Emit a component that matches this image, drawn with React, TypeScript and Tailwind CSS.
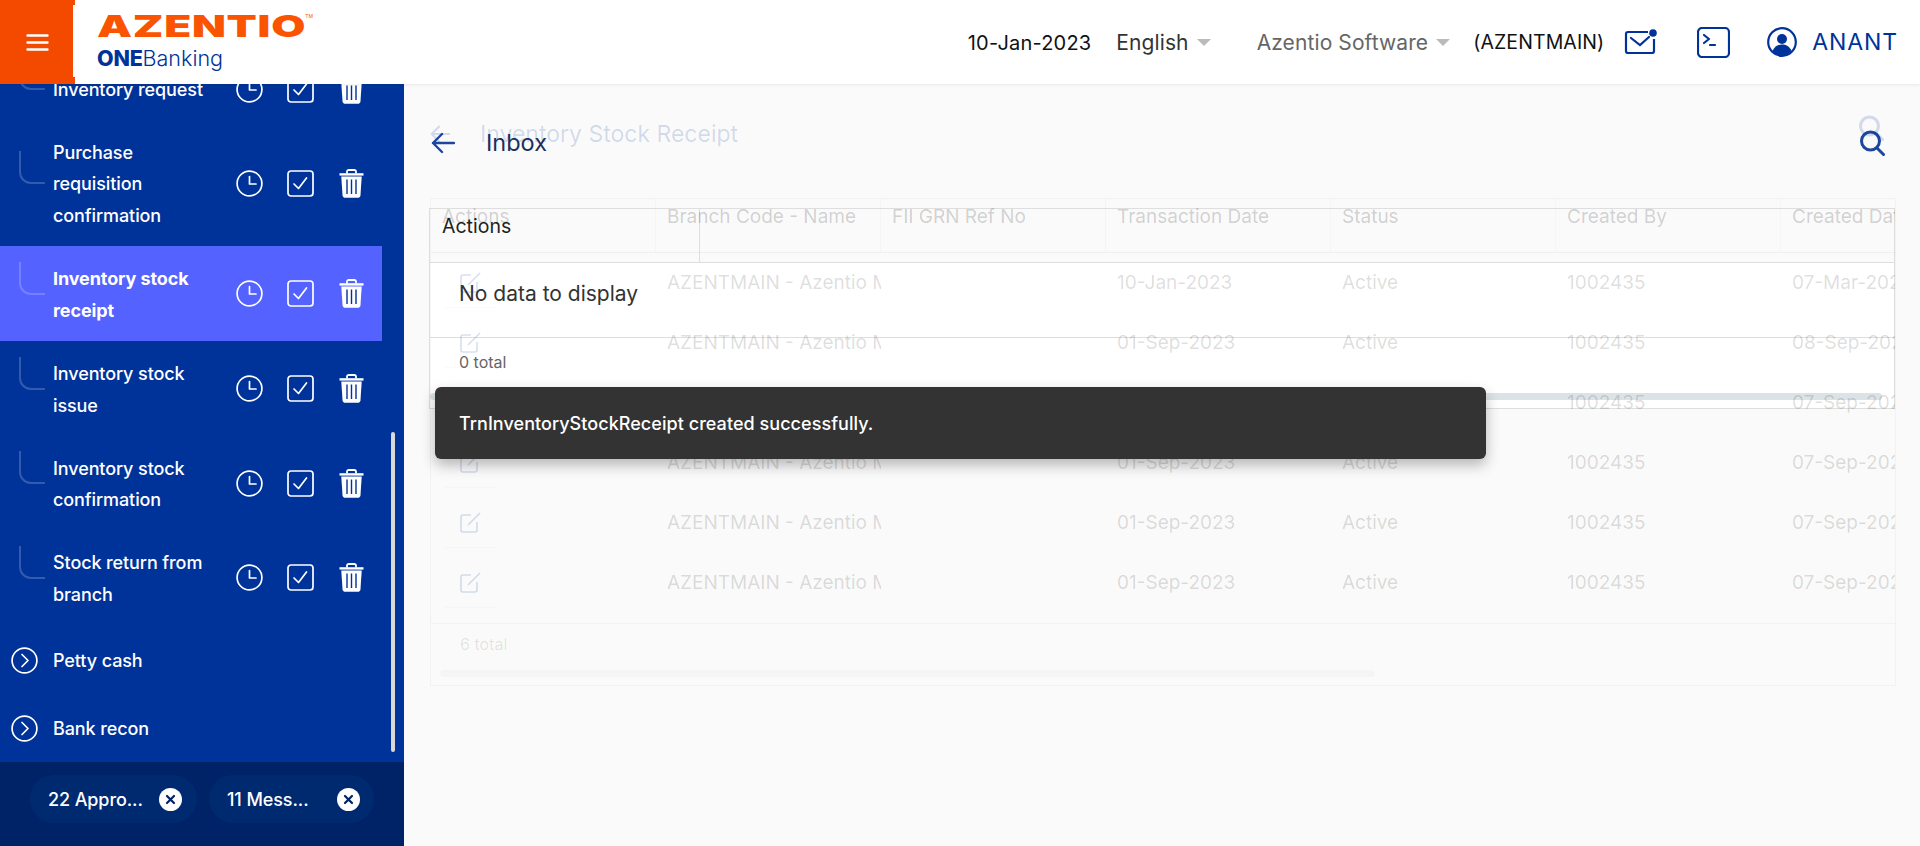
import React from "react";

const Clock = () => (
  <svg width="27" height="27" viewBox="0 0 27 27" fill="none" stroke="white" strokeWidth="1.7" className="shrink-0">
    <circle cx="13.5" cy="13.5" r="12.4" />
    <path d="M13.5 6.500v7.500h6.500" strokeLinecap="round" strokeLinejoin="round" />
  </svg>
);
const Check = () => (
  <svg width="27" height="27" viewBox="0 0 27 27" fill="none" stroke="white" strokeWidth="1.7" className="shrink-0">
    <rect x="1" y="1" width="25" height="25" rx="3" />
    <path d="M7 14l4.500 4.500L19.500 8" strokeLinecap="round" strokeLinejoin="round" />
  </svg>
);
const Trash = () => (
  <svg width="25" height="29" viewBox="0 0 25 29" className="shrink-0">
    <path d="M8 4.500V2.600C8 1.600 8.800 1 9.800 1h5.400c1 0 1.800.6 1.800 1.600v1.900" fill="none" stroke="white" strokeWidth="1.8" />
    <path d="M0.500 4.200h24v2.400h-24z" fill="white" />
    <path d="M2.300 7.600h20.400l-1.200 18.600c-.1 1.500-1.200 2.600-2.700 2.600H6.200c-1.500 0-2.600-1.100-2.700-2.600z" fill="white" />
    <path d="M8 10.500v14.500M12.500 10.500v14.500M17 10.500v14.500" stroke="#003399" strokeWidth="1.4" />
  </svg>
);
const Chevron = () => (
  <svg width="27" height="27" viewBox="0 0 27 27" fill="none" stroke="white" strokeWidth="1.7" className="shrink-0">
    <circle cx="13.5" cy="13.5" r="12.4" />
    <path d="M11 7.500l6 6-6 6" strokeLinecap="round" strokeLinejoin="round" />
  </svg>
);
const Close = () => (
  <svg width="23" height="23" viewBox="0 0 23 23" className="shrink-0">
    <circle cx="11.5" cy="11.5" r="11.5" fill="white" />
    <path d="M8 8l7 7M15 8l-7 7" stroke="#002366" strokeWidth="2.2" strokeLinecap="round" />
  </svg>
);
const Arrow = ({ w, color }: { w: number; color: string }) => (
  <svg width={w} height={w} viewBox="0 0 24 24" fill="none" stroke={color} strokeWidth="2.400" strokeLinecap="round" strokeLinejoin="round">
    <path d="M23 12H2M11 3l-9 9 9 9" />
  </svg>
);
const Search = ({ color }: { color: string }) => (
  <svg width="26" height="26" viewBox="0 0 26 26" fill="none" stroke={color} strokeWidth="3" strokeLinecap="round">
    <circle cx="11.5" cy="11" r="9" />
    <path d="M18 18l6.500 6.500" />
  </svg>
);
const Edit = () => (
  <svg width="22" height="21" viewBox="0 0 22 21" fill="none" stroke="rgba(0,51,153,0.16)" strokeWidth="1.6" className="block">
    <path d="M11 3H3a2 2 0 0 0-2 2v13a2 2 0 0 0 2 2h12a2 2 0 0 0 2-2V10" />
    <path d="M8 13L20 1" />
  </svg>
);

const items = [
  { l: ["Inventory request"], h: "h-[62px]" },
  { l: ["Purchase", "requisition", "confirmation"], h: "h-[126px]" },
  { l: ["Inventory stock", "receipt"], h: "h-[95px]", active: true },
  { l: ["Inventory stock", "issue"], h: "h-[95px]" },
  { l: ["Inventory stock", "confirmation"], h: "h-[94px]" },
  { l: ["Stock return from", "branch"], h: "h-[95px]" },
];

function Row({ l, h, active }: { l: string[]; h: string; active?: boolean }) {
  return (
    <div className={`relative flex w-[382px] items-center pl-[53px] ${h} ${active ? "bg-[#5462ff] font-bold" : "font-medium"}`}>
      <div className="absolute left-[19px] top-1/2 -mt-[32px] h-[33px] w-[26px] rounded-bl-[12px] border-b-2 border-l-2 border-white/20" />
      <div className="w-[183px] shrink-0 pt-[2px] text-[18px] leading-[31.5px] tracking-[-0.1px] text-white">
        {l.map((t) => (
          <div key={t}>{t}</div>
        ))}
      </div>
      <div className="flex items-center">
        <Clock />
        <span className="ml-[24px]"><Check /></span>
        <span className="ml-[25px]"><Trash /></span>
      </div>
    </div>
  );
}

const colsHead = ["Actions", "Branch Code - Name", "FII GRN Ref No", "Transaction Date", "Status", "Created By", "Created Date"];
const dates = [
  ["10-Jan-2023", "07-Mar-2023"],
  ["01-Sep-2023", "08-Sep-2023"],
  ["01-Sep-2023", "07-Sep-2023"],
  ["01-Sep-2023", "07-Sep-2023"],
  ["01-Sep-2023", "07-Sep-2023"],
  ["01-Sep-2023", "07-Sep-2023"],
];

export default function App() {
  return (
    <div className="flex h-[846px] w-[1920px] flex-col overflow-hidden bg-white font-['Inter',sans-serif] text-[#212529]">
      {/* Header */}
      <header className="relative z-20 flex h-[84px] shrink-0 items-center bg-white pr-[22px] shadow-[0_1px_3px_rgba(0,0,0,0.08)]">
        <div className="flex h-[84px] w-[75px] shrink-0 items-center justify-center bg-[#f34a00]">
          <svg width="23" height="17" viewBox="0 0 23 17" stroke="white" strokeWidth="2.4" strokeLinecap="round">
            <path d="M1.500 1.500h20M1.500 8.500h20M1.500 15.500h20" />
          </svg>
        </div>
        <div className="relative -ml-[2px] -mt-[3px] flex h-[72px] w-[264px] shrink-0 flex-col justify-center bg-white pl-[24px]">
          <div className="flex h-[30px] items-start">
            <span className="origin-left scale-x-[1.47] text-[30px] font-black leading-[30px] tracking-[0.5px] text-[#fb5400]">AZENTIO</span>
            <span className="ml-[66px] text-[5px] leading-[10px] text-[#fb5400]">TM</span>
          </div>
          <div className="mt-[5px] text-[21.5px] leading-[24px] text-[#003399]">
            <span className="font-extrabold tracking-[-0.2px]">ONE</span>
            <span className="font-light">Banking</span>
          </div>
        </div>
        <div className="ml-auto flex items-center">
          <span className="pt-[1px] text-[20px] tracking-[0.2px] text-[#111]">10-Jan-2023</span>
          <span className="ml-[25px] pt-[1px] text-[21px] tracking-[0.1px] text-[#333]">English</span>
          <span className="ml-[8px] h-0 w-0 border-x-[7px] border-t-[7px] border-x-transparent border-t-[#bbbbbb]" />
          <span className="ml-[46px] pt-[1px] text-[21px] tracking-[0.1px] text-[#666]">Azentio Software</span>
          <span className="ml-[8px] h-0 w-0 border-x-[7px] border-t-[7px] border-x-transparent border-t-[#bbbbbb]" />
          <span className="ml-[23px] pt-[1px] text-[19.5px] tracking-[0.1px] text-[#111]">(AZENTMAIN)</span>
          <svg className="ml-[20px]" width="33" height="26" viewBox="0 0 33 26" fill="none" stroke="#003399" strokeWidth="2.2">
            <path d="M24 3H4a2 2 0 0 0-2 2v17a2 2 0 0 0 2 2h24a2 2 0 0 0 2-2V10" />
            <path d="M7 9l9 7 9-8" strokeLinecap="round" />
            <circle cx="29" cy="4" r="3.8" fill="#003399" stroke="none" />
          </svg>
          <svg className="ml-[40px]" width="33" height="31" viewBox="0 0 33 31" fill="none" stroke="#003399" strokeWidth="2.2">
            <rect x="1" y="1" width="31" height="29" rx="4" />
            <path d="M7 8l5 4-5 4M13 18h5" strokeLinecap="round" strokeLinejoin="round" />
          </svg>
          <svg className="ml-[37px]" width="30" height="30" viewBox="0 0 30 30" fill="none" stroke="#003399" strokeWidth="2.2">
            <circle cx="15" cy="15" r="13.8" />
            <circle cx="15" cy="12" r="5" fill="#003399" stroke="none" />
            <path d="M5.500 24c2-5 5.500-6.500 9.500-6.500s7.500 1.500 9.500 6.500c-2.500 3-6 4.500-9.500 4.500s-7-1.500-9.500-4.500z" fill="#003399" stroke="none" />
          </svg>
          <span className="ml-[15px] text-[23px] tracking-[0.9px] text-[#003399]">ANANT</span>
        </div>
      </header>

      <div className="flex min-h-0 flex-1">
        {/* Sidebar */}
        <aside className="relative flex w-[404px] shrink-0 flex-col bg-[#003399]">
          <div className="min-h-0 flex-1 overflow-hidden">
            <div className="-mt-[26px]">
              {items.map((i) => (
                <Row key={i.l[0] + i.l[1]} {...i} />
              ))}
              <div className="flex h-[70px] items-center pl-[11px] text-[18px] font-medium tracking-[-0.1px] text-white">
                <Chevron />
                <span className="ml-[15px]">Petty cash</span>
              </div>
              <div className="flex h-[66px] items-center pl-[11px] text-[18px] font-medium tracking-[-0.1px] text-white">
                <Chevron />
                <span className="ml-[15px]">Bank recon</span>
              </div>
            </div>
          </div>
          <div className="absolute left-[391px] top-[348px] h-[320px] w-[4px] rounded-full bg-[#d9d9d9]" />
          <div className="flex h-[84px] shrink-0 items-start gap-[12px] bg-[#002266] pl-[30px] pt-[13px]">
            <div className="flex h-[48px] w-[167px] items-center rounded-full bg-[#002a70] pl-[18px] text-[18px] font-medium tracking-[-0.1px] text-white">
              <span className="w-[111px]">22 Appro...</span>
              <Close />
            </div>
            <div className="flex h-[48px] w-[165px] items-center rounded-full bg-[#002a70] pl-[18px] text-[18px] font-medium tracking-[-0.1px] text-white">
              <span className="w-[110px]">11 Mess...</span>
              <Close />
            </div>
          </div>
        </aside>

        {/* Main */}
        <main className="relative min-w-0 flex-1 bg-[#fafafa]">
          {/* Inbox layer, beneath the fading page */}
          <div className="absolute inset-x-[25px] top-[43px] flex flex-col">
            <div className="flex h-[32px] items-center pl-[2px]">
              <Arrow w={24} color="#1d469f" />
              <span className="ml-[31px] text-[23.5px] text-[#1c2f5c]">Inbox</span>
              <span className="ml-auto mr-[10px]"><Search color="#1d469f" /></span>
            </div>
            <div className="mt-[49px] border border-[#dedede]">
              <div className="flex h-[54px] border-b border-[#dedede]">
                <div className="flex w-[270px] items-start border-r border-[#dedede] pl-[12px] pt-[3px] text-[19.5px] text-[#222]">Actions</div>
              </div>
              <div className="bg-white">
                <div className="flex h-[75px] items-start border-b border-[#dedede] pl-[29px] pt-[15px] text-[21px] text-[#333]">No data to display</div>
                <div className="h-[54px] pl-[29px] pt-[12px] text-[16px] text-[#666]">0 total</div>
                <div className="h-[16px] pr-[12px] pt-[1px]">
                  <div className="h-[7px] rounded-full bg-[#dce3e6]" />
                </div>
              </div>
            </div>
          </div>

          {/* Fading page */}
          <div className="relative flex h-full flex-col pl-[26px] pr-[24px] pt-[30px]">
            <div className="flex h-[40px] items-center">
              <Arrow w={20} color="rgba(0,51,153,0.16)" />
              <span className="ml-[30px] text-[23px] text-[rgba(0,51,153,0.16)]">Inventory Stock Receipt</span>
              <span className="ml-auto mr-[12px] -mt-[12px]"><Search color="rgba(0,51,153,0.16)" /></span>
            </div>
            <div className="mt-[44px] h-[488px] overflow-hidden border border-black/[0.03] text-[19px]">
              <div className="grid h-[54px] grid-cols-[repeat(7,225px)] border-b border-black/[0.04] text-[19px] text-black/[0.18]">
                {colsHead.map((c) => (
                  <div key={c} className="overflow-hidden whitespace-nowrap border-r border-black/[0.02] pl-[11px] pt-[4px]">{c}</div>
                ))}
              </div>
              <div>
                {dates.map((d, i) => (
                  <div key={i} className="grid h-[60px] grid-cols-[repeat(7,225px)] items-center text-black/[0.14]">
                    <div className="pl-[14px]">
                      <div className="w-[50px] border-b border-black/[0.02] py-[14px] pl-[15px]"><Edit /></div>
                    </div>
                    <div className="overflow-hidden whitespace-nowrap pl-[11px]">AZENTMAIN - Azentio Microfinance</div>
                    <div />
                    <div className="pl-[11px]">{d[0]}</div>
                    <div className="pl-[11px]">Active</div>
                    <div className="pl-[11px]">1002435</div>
                    <div className="overflow-hidden whitespace-nowrap pl-[11px]">{d[1]}</div>
                  </div>
                ))}
              </div>
              <div className="mt-[10px] h-[47px] border-t border-black/[0.03] pl-[29px] pt-[8px] text-[16px] text-black/[0.1]">6 total</div>
              <div className="ml-[9px] h-[7px] w-[935px] rounded-full bg-black/[0.02]" />
            </div>
          </div>

          {/* Toast */}
          <div className="absolute left-[31px] top-[303px] flex h-[72px] w-[1051px] items-center rounded-[6px] bg-[#333333] pl-[24px] text-[18px] font-medium tracking-[0.05px] text-white shadow-[0_6px_14px_rgba(0,0,0,0.28)]">
            TrnInventoryStockReceipt created successfully.
          </div>
        </main>
      </div>
    </div>
  );
}
